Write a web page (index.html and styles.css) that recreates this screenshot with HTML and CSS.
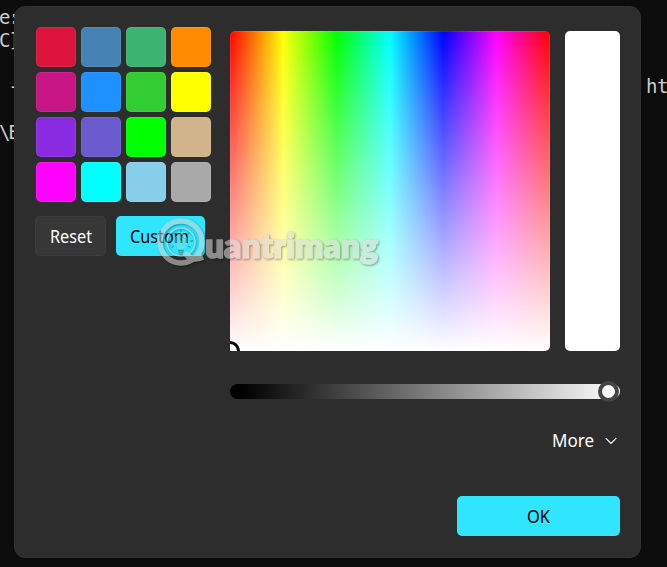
FILE: index.html
```html
<!DOCTYPE html>
<html lang="en">
<head>
<meta charset="utf-8">
<title>Color picker</title>
<link rel="stylesheet" href="styles.css">
</head>
<body>
<pre class="terminal terminal-left">e:
C]

 -

\B</pre>
<div class="terminal terminal-right">ht</div>
<main class="dialog">
  <section class="presets">
    <div class="swatches">
      <i class="swatch crimson"></i><i class="swatch steel"></i><i class="swatch sea"></i><i class="swatch orange"></i>
      <i class="swatch violetred"></i><i class="swatch dodger"></i><i class="swatch limegreen"></i><i class="swatch yellow"></i>
      <i class="swatch blueviolet"></i><i class="swatch slate"></i><i class="swatch lime"></i><i class="swatch tan"></i>
      <i class="swatch magenta"></i><i class="swatch cyan"></i><i class="swatch sky"></i><i class="swatch gray"></i>
    </div>
    <div class="actions">
      <button class="button reset"><svg width="44" height="26"><text x="1" y="20" textLength="42" lengthAdjust="spacingAndGlyphs">Reset</text></svg></button>
      <button class="button accent custom"><svg width="62" height="26"><text x="1" y="20" textLength="59" lengthAdjust="spacingAndGlyphs">Custom</text></svg></button>
    </div>
  </section>
  <section class="picker">
    <div class="colors">
      <div class="spectrum"><span class="cursor"></span></div>
      <div class="preview"></div>
    </div>
    <div class="slider"><span class="thumb"></span></div>
    <div class="more">
      <svg width="43" height="26"><text x="0" y="19" textLength="42" lengthAdjust="spacingAndGlyphs">More</text></svg>
      <svg class="chevron" width="12" height="8" viewBox="0 0 12 8"><path d="M.7 1.2 6 6.5l5.3-5.3"/></svg>
    </div>
    <button class="button accent ok"><svg width="26" height="26"><text x="1" y="20" textLength="23" lengthAdjust="spacingAndGlyphs">OK</text></svg></button>
  </section>
</main>
<svg class="watermark" width="236" height="60" viewBox="0 0 236 60">
  <g class="mark">
    <circle class="ring" cx="31" cy="27" r="21"/>
    <circle class="ring-inner" cx="31" cy="27" r="14"/>
    <path class="tail" d="M35 37q5 10 18 5"/>
    <text class="brand" x="55" y="43" textLength="173" lengthAdjust="spacingAndGlyphs">uantrimang</text>
  </g>
  <path class="rays" d="M31 17v-3M24.500 19.500l-2-2M37.500 19.500l2-2M22 26h-3M40 26h3M24 31l-2.500 1.500M38 31l2.500 1.500"/>
  <path class="bulb" d="M28.500 33c0-3-3.500-4-3.500-8a6 6 0 0 1 12 0c0 4-3.500 5-3.500 8zM31 32v-6m-2.500-2 2.500 2.500 2.500-2.500"/>
  <path class="base" d="M28 35.500h6M28.500 37.500h5M29.500 39.500h3"/>
</svg>
</body>
</html>
```
FILE: styles.css
```css
* { box-sizing: border-box; }

body {
  margin: 0;
  width: 667px;
  height: 567px;
  padding: 6px 0 0 14px;
  overflow: hidden;
  position: relative;
  background: #0c0c0c;
  font-family: "Noto Sans", "Open Sans", sans-serif;
}

.terminal {
  position: absolute;
  margin: 0;
  color: #ccc;
  font: 19px/23px "DejaVu Sans Mono", monospace;
}

.terminal-left { left: -1px; top: 6px; letter-spacing: -2px; }
.terminal-right { left: 646px; top: 75px; letter-spacing: -.5px; }

.dialog {
  position: relative;
  display: flex;
  gap: 19px;
  width: 627px;
  height: 552px;
  padding: 20px 20px 0;
  border: 1px solid #323232;
  border-radius: 11px;
  background: #2d2d2d;
}

.presets { width: 176px; }

.swatches {
  display: grid;
  grid-template-columns: repeat(4, 40px);
  gap: 5px;
  padding-left: 1px;
}

.swatch {
  height: 40px;
  border-radius: 5px;
  box-shadow: inset 0 0 0 1px rgba(255, 255, 255, .08);
}

.crimson { background: #dc143c; }
.steel { background: #4682b4; }
.sea { background: #3cb371; }
.orange { background: #ff8c00; }
.violetred { background: #c71585; }
.dodger { background: #1e90ff; }
.limegreen { background: #32cd32; }
.yellow { background: #ff0; }
.blueviolet { background: #8a2be2; }
.slate { background: #6a5acd; }
.lime { background: #0f0; }
.tan { background: #d2b48c; }
.magenta { background: #f0f; }
.cyan { background: #0ff; }
.sky { background: #87ceeb; }
.gray { background: #a9a9a9; }

.actions {
  display: flex;
  gap: 10px;
  margin-top: 14px;
}

.button {
  display: flex;
  align-items: center;
  justify-content: center;
  height: 40px;
  padding: 0;
  border: 0;
  border-radius: 5px;
  color: #fff;
  font-family: inherit;
}

.button svg, .more svg { overflow: visible; }

.button text, .more text {
  fill: currentColor;
  font-size: 17.500px;
}

.reset {
  width: 71px;
  background: #373737;
  box-shadow: inset 0 0 0 1px #3d3d3d;
}

.accent { background: #30e6ff; color: #000; }
.custom { width: 89px; padding-right: 1px; }

.picker {
  display: flex;
  flex-direction: column;
  width: 390px;
  padding-top: 4px;
}

.colors { display: flex; gap: 15px; }

.spectrum {
  position: relative;
  width: 320px;
  height: 320px;
  overflow: hidden;
  border-radius: 5px 5px 5px 0;
  background:
    linear-gradient(rgba(255, 255, 255, 0), #fff),
    linear-gradient(to right, #f00, #ff0, #0f0, #0ff, #00f, #f0f, #f00);
  box-shadow: inset 0 0 0 1px rgba(255, 255, 255, .1);
}

.cursor {
  position: absolute;
  left: -10px;
  bottom: -10px;
  width: 20px;
  height: 20px;
  border: 3px solid #000;
  border-radius: 50%;
}

.preview {
  width: 55px;
  height: 320px;
  border-radius: 5px;
  background: #fff;
}

.slider {
  position: relative;
  height: 15px;
  margin-top: 33px;
  border-radius: 8px;
  background: linear-gradient(to right, #000 3%, #fff);
}

.thumb {
  position: absolute;
  right: 1px;
  top: -3px;
  width: 21px;
  height: 21px;
  border: 4px solid #454545;
  border-radius: 50%;
  background: #fff;
}

.more {
  display: flex;
  align-items: center;
  justify-content: flex-end;
  gap: 10px;
  height: 24px;
  margin-top: 30px;
  padding-right: 3px;
  color: #fff;
}

.chevron {
  fill: none;
  stroke: #fff;
  stroke-width: 1.2;
}

.ok {
  width: 163px;
  margin-top: 43px;
  align-self: flex-end;
}

.watermark {
  position: absolute;
  left: 150px;
  top: 215px;
  opacity: .55;
  pointer-events: none;
}

.mark { filter: drop-shadow(1px 1px 1px rgba(0, 0, 0, .65)); }
.ring, .ring-inner, .tail, .bulb, .rays, .base { fill: none; stroke: #d6d6d6; }
.ring { stroke-width: 5.500; }
.ring-inner { stroke-width: 1.5; stroke: #bfe3e8; }
.tail { stroke-width: 6; }
.rays, .base { stroke: #35646c; stroke-width: 1.3; }
.bulb { fill: rgba(140, 205, 215, .5); stroke-width: 1; }

.brand {
  fill: #ddd;
  stroke: #ddd;
  stroke-width: 1.5;
  stroke-linejoin: round;
  font: 800 33px Lato, sans-serif;
}
```
